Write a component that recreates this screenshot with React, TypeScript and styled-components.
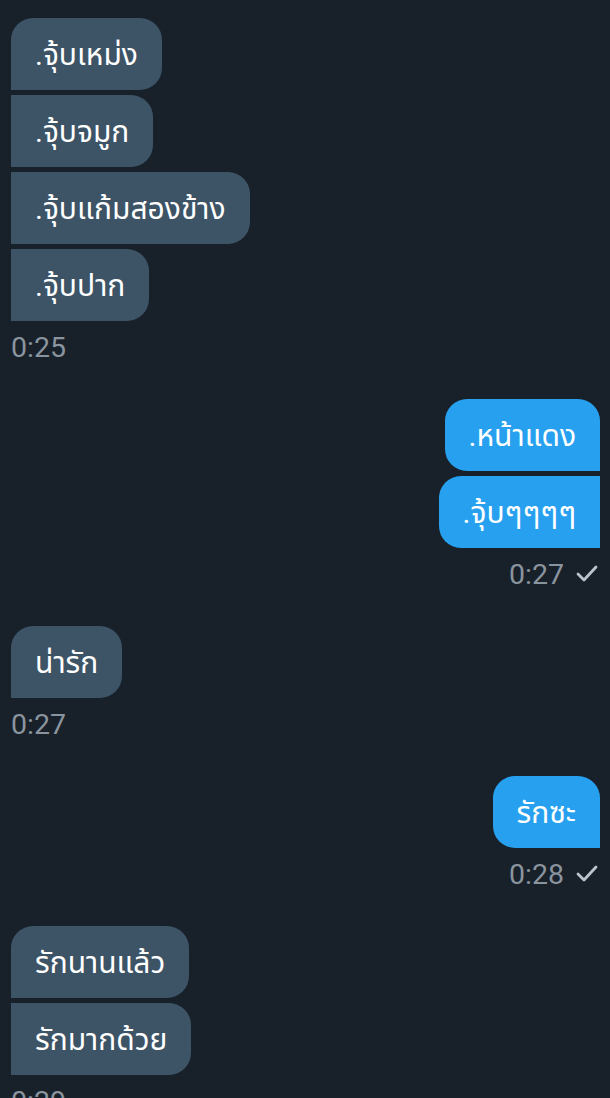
import React from "react";
import styled, { createGlobalStyle } from "styled-components";

const Global = createGlobalStyle`
  html, body { margin: 0; padding: 0; background: #18202a; }
  body { font-family: Roboto, "Noto Sans", "Noto Sans Thai", "Loma", sans-serif; }
`;

const Page = styled.div`
  width: 610px;
  height: 1098px;
  overflow: hidden;
  background: #18202a;
  padding: 18px 10px 0 11px;
  box-sizing: border-box;
  display: flex;
  flex-direction: column;
  gap: 35px;
`;

const Group = styled.div<{ $out?: boolean }>`
  display: flex;
  flex-direction: column;
  align-items: ${(p) => (p.$out ? "flex-end" : "flex-start")};
  gap: 5px;
`;

const Bubble = styled.div<{ $out?: boolean; $first?: boolean; $last?: boolean }>`
  height: 72px;
  box-sizing: border-box;
  padding: 3px 24px 0;
  display: flex;
  align-items: center;
  font-size: 30px;
  color: #ffffff;
  background: ${(p) => (p.$out ? "#27a1ef" : "#3d5366")};
  border-radius: ${(p) =>
    p.$out
      ? `22px ${p.$first ? "22px" : "0"} 0 22px`
      : `${p.$first ? "22px" : "0"} 22px 22px 0`};
  white-space: nowrap;
`;

const Time = styled.div<{ $out?: boolean }>`
  display: flex;
  align-items: center;
  gap: 12px;
  height: 34px;
  margin-top: 4px;
  padding-right: 2px;
  font-family: Roboto, sans-serif;
  font-size: 28.5px;
  color: #8a949e;
`;

const Check = () => (
  <svg width="22" height="18" viewBox="0 0 22 18">
    <polyline
      points="2,9 8,15 20,2"
      fill="none"
      stroke="#bcc3ca"
      strokeWidth="2.8"
      strokeLinecap="round"
      strokeLinejoin="round"
    />
  </svg>
);

type Msg = { out?: boolean; texts: string[]; time: string };

const messages: Msg[] = [
  { texts: [".จุ้บเหม่ง", ".จุ้บจมูก", ".จุ้บแก้มสองข้าง", ".จุ้บปาก"], time: "0:25" },
  { out: true, texts: [".หน้าแดง", ".จุ้บๆๆๆๆ"], time: "0:27" },
  { texts: ["น่ารัก"], time: "0:27" },
  { out: true, texts: ["รักซะ"], time: "0:28" },
  { texts: ["รักนานแล้ว", "รักมากด้วย"], time: "0:29" },
];

export default function App() {
  return (
    <>
      <Global />
      <Page>
        {messages.map((m, i) => (
          <Group key={i} $out={m.out}>
            {m.texts.map((t, j) => (
              <Bubble key={j} $out={m.out} $first={j === 0} $last={j === m.texts.length - 1}>
                {t}
              </Bubble>
            ))}
            <Time $out={m.out}>
              <span>{m.time}</span>
              {m.out && <Check />}
            </Time>
          </Group>
        ))}
      </Page>
    </>
  );
}
